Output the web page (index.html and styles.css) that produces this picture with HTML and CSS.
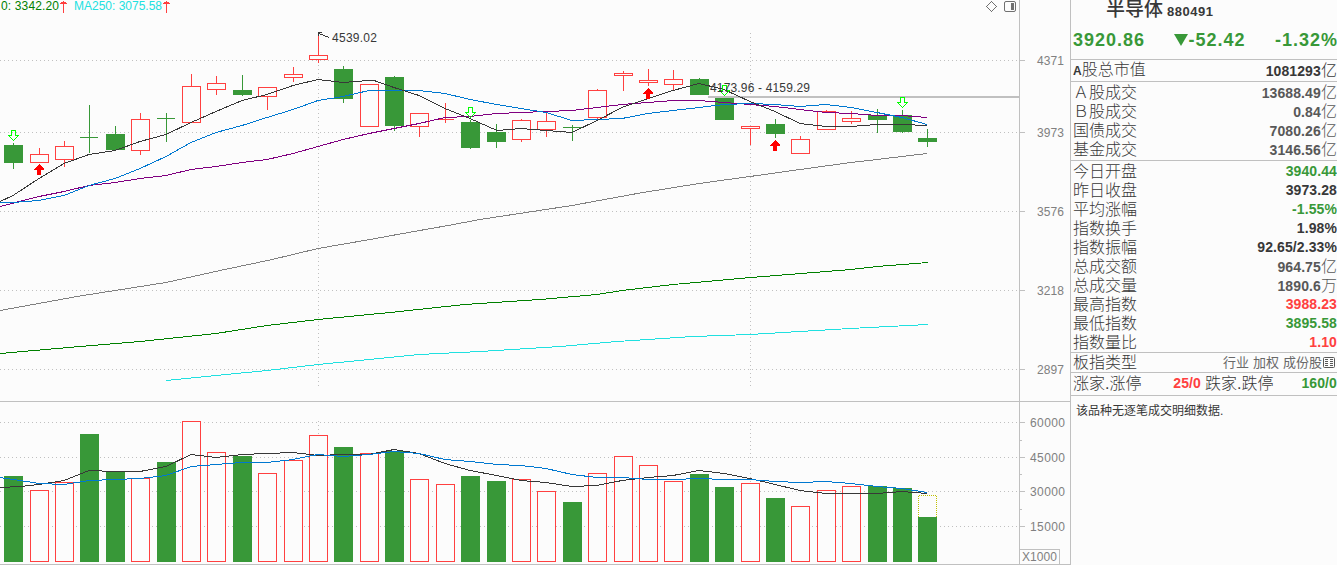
FILE: index.html
```html
<!DOCTYPE html>
<html lang="zh-CN">
<head>
  <meta charset="UTF-8">
  <meta name="viewport" content="width=device-width, initial-scale=1.0">
  <title>半导体 880491</title>
  <link rel="stylesheet" href="styles.css">
</head>
<body>
  <div class="terminal">
    <svg id="chart" class="chart" width="1070" height="565" viewBox="0 0 1070 565">
      <g id="grid"></g>
      <g id="bars"></g>
      <g id="lines"></g>
      <g id="marks"></g>
      <g class="legend">
        <text class="ma120" x="1" y="10" textLength="58">0: 3342.20</text>
        <text class="ma250" x="74" y="10" textLength="88">MA250: 3075.58</text>
        <path class="up" d="M63.5 13V1M60 3.5h7M61 2.5h5M166.5 13V1M163 3.5h7M164 2.5h5"/>
      </g>
      <g class="tools">
        <path class="thin" d="M986.5 6.5l5-5 5 5-5 5z"/>
        <rect x="1004.5" y="1.5" width="11" height="10" rx="1.5"/>
        <rect class="fill" x="1011" y="3" width="3" height="7"/>
      </g>
      <g id="labels"></g>
    </svg>

    <aside class="quote">
      <header class="name"><h1>半导体</h1><span>880491</span></header>
      <div class="price"><b>3920.86</b><b class="change"><i></i>-52.42</b><b>-1.32%</b></div>
      <div class="group cap">
        <div class="row"><span><b>A</b>股总市值</span><b>1081293<em>亿</em></b></div>
      </div>
      <div class="group turnover">
        <div class="row"><span>Ａ股成交</span><b class="gray">13688.49<em>亿</em></b></div>
        <div class="row"><span>Ｂ股成交</span><b class="gray">0.84<em>亿</em></b></div>
        <div class="row"><span>国债成交</span><b class="gray">7080.26<em>亿</em></b></div>
        <div class="row"><span>基金成交</span><b class="gray">3146.56<em>亿</em></b></div>
      </div>
      <div class="group detail">
        <div class="row"><span>今日开盘</span><b class="green">3940.44</b></div>
        <div class="row"><span>昨日收盘</span><b>3973.28</b></div>
        <div class="row"><span>平均涨幅</span><b class="green">-1.55%</b></div>
        <div class="row"><span>指数换手</span><b>1.98%</b></div>
        <div class="row"><span>指数振幅</span><b>92.65/2.33%</b></div>
        <div class="row"><span>总成交额</span><b class="gray">964.75<em>亿</em></b></div>
        <div class="row"><span>总成交量</span><b class="gray">1890.6<em>万</em></b></div>
        <div class="row"><span>最高指数</span><b class="red">3988.23</b></div>
        <div class="row"><span>最低指数</span><b class="green">3895.58</b></div>
        <div class="row"><span>指数量比</span><b class="red">1.10</b></div>
      </div>
      <div class="group type">
        <div class="row">
          <span>板指类型</span>
          <div class="links">
            <span>行业</span><span>加权</span><span>成份股</span>
            <svg width="12" height="12" viewBox="0 0 12 12">
              <rect x="0.5" y="0.5" width="11" height="10" rx="1"/>
              <path d="M2 2.5h3M2 4.5h3M2 6.5h3M2 8.5h3M7 2.5h3M7 4.5h3M7 6.5h3M7 8.5h3"/>
            </svg>
          </div>
        </div>
      </div>
      <div class="group updown">
        <span>涨家.涨停</span><b class="red">25/0</b><span>跌家.跌停</span><b class="green last">160/0</b>
      </div>
      <p class="note">该品种无逐笔成交明细数据.</p>
    </aside>
  </div>

  <script src="chart.js"></script>
</body>
</html>
```
FILE: styles.css
```css
body {
  margin: 0;
  background: #fcfcfc;
  color: #383838;
  font-family: "Liberation Sans", "Noto Sans CJK SC", sans-serif;
  overflow: hidden;
}
.terminal {
  display: flex;
  width: 1337px;
  height: 565px;
  overflow: hidden;
}

/* chart */
.chart {
  flex: none;
  display: block;
  shape-rendering: crispEdges;
  font-size: 12px;
}
.chart path,
.chart polyline {
  fill: none;
}
.frame {
  stroke: #c0c0c0;
}
.dots {
  stroke: #c0c0c0;
  stroke-dasharray: 1 3;
}
.level {
  fill: #c0c0c0;
}
.axis {
  fill: #808080;
}
.tag {
  fill: #383838;
}
.rise {
  fill: #fcfcfc;
  stroke: #ff4040;
}
.fall {
  fill: #389838;
  stroke: #389838;
}
.forecast {
  fill: none;
  stroke: #c0c000;
  stroke-dasharray: 1 1;
}
.ma5 { stroke: #383838; }
.ma10 { stroke: #0078d0; }
.ma20 { stroke: #800080; }
.ma60 { stroke: #808080; }
.ma120 { stroke: #008000; }
.ma250 { stroke: #20e0e0; }
.legend text {
  stroke: none;
}
.legend .ma120 { fill: #008000; }
.legend .ma250 { fill: #20e0e0; }
.legend .up { stroke: #ff4040; }
.buy {
  fill: #ff0000;
}
.sell {
  fill: none;
  stroke: #00ff00;
}
.tools path,
.tools rect {
  fill: none;
  stroke: #707070;
}
.tools rect {
  shape-rendering: auto;
}
.tools .fill {
  fill: #707070;
  stroke: none;
}

/* quote panel */
.quote {
  flex: none;
  box-sizing: border-box;
  width: 267px;
  border-left: 1px solid #c0c0c0;
  overflow: hidden;
}
.name {
  display: flex;
  align-items: center;
  height: 20px;
  padding-left: 35px;
}
.name h1 {
  margin: 0 4px 0 0;
  font-size: 19px;
  font-weight: 500;
  line-height: 20px;
}
.name span {
  padding-top: 3px;
  font-size: 13px;
  font-weight: bold;
  letter-spacing: 0.5px;
}
.price {
  display: flex;
  justify-content: space-between;
  align-items: center;
  height: 39px;
  padding: 2px 0 0 2px;
  box-sizing: border-box;
  color: #389838;
  font-size: 18px;
  letter-spacing: 1px;
}
.price b:last-child {
  margin-right: -1px;
}
.change i {
  display: inline-block;
  border: 7px solid transparent;
  border-top: 12px solid #389838;
  border-bottom: 0;
}
.group {
  border-top: 1px solid #c0c0c0;
}
.row {
  display: flex;
  justify-content: space-between;
  align-items: center;
  height: 19px;
  padding-left: 2px;
  font-size: 16px;
  line-height: 19px;
  white-space: nowrap;
}
.row > span,
.updown span {
  font-weight: 300;
}
.row > b,
.updown b {
  font-size: 14px;
  letter-spacing: 0.1px;
}
.row span b {
  font-size: 12px;
  font-weight: bold;
}
.row em {
  font-size: 16px;
  font-style: normal;
  font-weight: 300;
}
.cap .row {
  height: 21px;
}
.turnover,
.detail {
  padding-top: 1px;
}
.turnover {
  padding-bottom: 1px;
}
.green {
  color: #389838;
}
.red {
  color: #ff4040;
}
.gray {
  color: #585858;
}
.links {
  display: flex;
  align-items: center;
  gap: 4px;
  padding-right: 2px;
  color: #686868;
  font-size: 13px;
}
.links svg {
  margin-left: -3px;
  fill: none;
  stroke: #585858;
}
.updown {
  display: flex;
  align-items: center;
  height: 22px;
  padding-left: 2px;
  white-space: nowrap;
  font-size: 16px;
  line-height: 19px;
}
.updown span,
.updown b {
  margin-top: -2px;
}
.updown .red {
  width: 64px;
  margin-right: 4px;
  text-align: right;
}
.updown .last {
  margin-left: 28px;
}
.note {
  margin: 0;
  padding: 6px 0 0 5px;
  border-top: 1px solid #c0c0c0;
  font-size: 12px;
  line-height: 18px;
}
```
FILE: chart.js
```js
const NS = 'http://www.w3.org/2000/svg';
const W = 19;

function add(group, tag, attrs, text) {
  const el = document.createElementNS(NS, tag);
  for (const key in attrs) el.setAttribute(key, attrs[key]);
  if (text) el.textContent = text;
  document.getElementById(group).appendChild(el);
}

function line(group, cls, x1, y1, x2, y2) {
  add(group, 'path', { class: cls, d: `M${x1} ${y1}L${x2} ${y2}` });
}

// x, colour, high, body top, body bottom, low, volume top
const candles = [
  [4, 'g', 143, 145, 163, 169, 476], [30, 'r', 148, 154, 163, 163, 490],
  [55, 'r', 141, 146, 160, 167, 482], [80, 'g', 105, 137, 138, 153, 434],
  [106, 'g', 126, 134, 150, 150, 472], [131, 'r', 113, 119, 151, 155, 478],
  [157, 'g', 113, 118, 119, 142, 462], [182, 'r', 74, 86, 123, 123, 421],
  [207, 'r', 76, 83, 90, 95, 452], [233, 'g', 75, 90, 95, 96, 456],
  [258, 'r', 87, 87, 97, 110, 473], [284, 'r', 67, 74, 78, 82, 460],
  [309, 'r', 34, 55, 60, 63, 435], [334, 'g', 66, 69, 99, 103, 447],
  [360, 'r', 84, 84, 127, 127, 453], [385, 'g', 76, 77, 126, 131, 451],
  [410, 'r', 113, 113, 127, 137, 479], [436, 'r', 103, 119, 120, 123, 484],
  [461, 'g', 120, 122, 148, 149, 476], [487, 'g', 124, 132, 142, 148, 481],
  [512, 'r', 119, 120, 140, 142, 479], [537, 'r', 113, 121, 130, 137, 491],
  [563, 'g', 125, 127, 128, 141, 502], [588, 'r', 89, 90, 118, 119, 473],
  [614, 'r', 71, 73, 76, 91, 456], [639, 'r', 69, 80, 83, 86, 465],
  [664, 'r', 70, 79, 85, 90, 481], [690, 'g', 78, 79, 95, 95, 474],
  [715, 'g', 98, 98, 120, 120, 487], [741, 'r', 126, 126, 129, 145, 483],
  [766, 'g', 119, 124, 134, 138, 498], [791, 'r', 136, 139, 154, 154, 506],
  [817, 'r', 110, 111, 130, 130, 490], [842, 'r', 111, 118, 122, 124, 486],
  [868, 'g', 109, 115, 120, 133, 486], [893, 'g', 110, 115, 132, 133, 488],
  [918, 'g', 129, 138, 142, 147, 517]
];

const mas = {
  ma60: '0,310.5 80,296 166,282.5 220,270.5 270,260 318,248.5 370,239.5 400,234 448,225.5 480,219.5 572,205.5 640,193 699,183.5 750,176.5 800,169.5 851,162.5 877,159.5 927,153.5',
  ma120: '0,353.5 80,346.5 140,341.5 216,333.5 267,325.5 318,319.5 390,312.5 465,304.5 540,299.5 597,294.5 622,290.5 673,284.5 751,277.5 851,269.5 877,266.5 928,262.5',
  ma250: '166,380.5 216,375.5 267,370.5 318,364.5 349,361.5 419,354.5 480,351.5 560,346.5 617,341.5 693,336.5 750,334.5 850,328.5 928,324.5',
  ma20: '0,206.5 39,196.5 64,191.5 89,185.5 115,182.5 140,178.5 166,175.5 191,169.5 216,166.5 242,162.5 267,159.5 293,153.5 318,146.5 343,139.5 369,133.5 394,128.5 419,123.5 445,117.5 470,116.5 497,113.5 521,112.5 546,111.5 572,110.5 597,107.5 622,104.5 648,102.5 673,100.5 699,100.5 724,102.5 750,104.5 775,106.5 800,109.5 826,112.5 851,113.5 877,115.5 902,115.5 927,117.5',
  ma10: '0,202.5 13,202.5 39,200.5 64,195.5 89,185.5 115,178.5 140,168.5 166,156.5 191,142.5 216,132.5 242,125.5 267,117.5 293,109.5 318,100.5 343,96.5 369,90.5 419,90.5 445,93.5 470,99.5 497,104.5 521,108.5 546,112.5 572,120.5 597,119.5 622,118.5 648,113.5 673,110.5 699,107.5 724,104.5 750,103.5 775,104.5 800,106.5 826,104.5 851,107.5 877,112.5 902,117.5 927,124.5',
  ma5: '0,201.5 13,195.5 39,178.5 64,163.5 89,154.5 115,150.5 140,141.5 166,134.5 191,122.5 216,111.5 242,100.5 267,94.5 293,85.5 318,79.5 343,82.5 369,80.5 374,80.5 394,87.5 419,95.5 445,108.5 470,118.5 497,130.5 521,128.5 546,130.5 572,132.5 597,120.5 622,107.5 648,98.5 673,90.5 699,83.5 724,89.5 750,101.5 775,111.5 800,123.5 826,126.5 851,126.5 877,124.5 902,124.5 927,125.5'
};

const volumeMas = {
  ma5: '0,487.5 20,486.5 39,484.5 64,480.5 89,470.5 115,471.5 140,471.5 166,466.5 191,454.5 216,457.5 242,454.5 267,453.5 293,452.5 318,455.5 343,454.5 369,454.5 394,449.5 419,453.5 445,463.5 470,470.5 497,475.5 521,480.5 546,482.5 572,486.5 597,485.5 622,480.5 648,477.5 673,475.5 699,470.5 724,473.5 750,478.5 775,484.5 800,490.5 826,493.5 877,493.5 902,491.5 927,493.5',
  ma10: '0,477.5 20,480.5 39,483.5 64,484.5 89,480.5 115,479.5 140,478.5 166,475.5 191,466.5 216,464.5 242,462.5 267,462.5 293,459.5 318,454.5 343,456.5 369,454.5 394,451.5 419,453.5 445,459.5 470,461.5 497,464.5 521,465.5 546,468.5 572,474.5 597,477.5 622,477.5 648,479.5 673,479.5 699,478.5 724,479.5 750,479.5 775,481.5 800,482.5 826,481.5 851,483.5 877,486.5 902,488.5 927,492.5'
};

// grid, frame and axis
const priceAxis = { 4371: 60, 3973: 132, 3576: 211, 3218: 290, 2897: 369 };
const volumeAxis = { 60000: 422, 45000: 457, 30000: 491, 15000: 526 };
for (const axis of [priceAxis, volumeAxis]) {
  for (const label in axis) {
    const y = axis[label] + 0.5;
    line('grid', 'dots', 0, y, 1019, y);
    line('grid', 'frame', 1019, y, 1025, y);
    add('labels', 'text', {
      class: 'axis', x: axis === priceAxis ? 1037 : 1030, y: y + 4,
      textLength: axis === priceAxis ? 27 : 35
    }, label);
  }
}
for (const y of [440.5, 474.5, 509.5]) line('grid', 'frame', 1019, y, 1022, y);
for (const x of [318.5, 750.5]) {
  line('grid', 'dots', x, 33, x, 387);
  line('grid', 'dots', x, 421, x, 562);
}
line('grid', 'frame', 0, 401.5, 1070, 401.5);
line('grid', 'frame', 0, 564.5, 1070, 564.5);
line('grid', 'frame', 1019.5, 0, 1019.5, 565);
add('grid', 'path', { class: 'frame', d: 'M1020 549.5H1059.5V565' });
add('labels', 'text', { class: 'axis', x: 1022, y: 561, textLength: 35 }, 'X1000');
add('grid', 'rect', { class: 'level', x: 708, y: 96, width: 311, height: 2 });

// candles and volume
function box(cls, x, top, bottom) {
  add('bars', 'rect', { class: cls, x: x + 0.5, y: top + 0.5, width: W - 1, height: bottom - top - 1 });
}
for (const [x, colour, high, top, bottom, low, volume] of candles) {
  const cls = colour === 'r' ? 'rise' : 'fall';
  const mid = x + 9.5;
  if (high < top) line('bars', cls, mid, high, mid, top);
  if (low > bottom) line('bars', cls, mid, bottom, mid, low);
  if (bottom - top === 1) line('bars', cls, x, top + 0.5, x + 18, top + 0.5);
  else box(cls, x, top, bottom);
  box(cls, x, volume, 562);
}
add('bars', 'rect', { fill: '#fcfcfc', x: 918, y: 495, width: W, height: 22 });
add('bars', 'path', { class: 'forecast', d: 'M918.5 517V495.5H936.5V517' });

for (const set of [mas, volumeMas]) {
  for (const name in set) add('lines', 'polyline', { class: name, points: set[name] });
}

// signals
for (const [x, y] of [[13, 130], [470, 107], [724, 85], [902, 97]]) {
  add('marks', 'path', { class: 'sell', d: `M${x - 1.5} ${y + 0.5}h4v5h3l-5 5-5-5h3z` });
}
for (const [x, y] of [[39, 164], [648, 88], [775, 140]]) {
  add('marks', 'polygon', { class: 'buy', points: `${x},${y} ${x + 5},${y + 5} ${x + 5},${y + 6} ${x + 2},${y + 6} ${x + 2},${y + 11} ${x - 2},${y + 11} ${x - 2},${y + 6} ${x - 5},${y + 6} ${x - 5},${y + 5}` });
}
add('marks', 'path', { class: 'ma5', d: 'M318.5 36V32.5M318 32.5h4M319 33.5l10 4' });
add('labels', 'text', { class: 'tag', x: 332, y: 42, textLength: 45 }, '4539.02');
add('labels', 'text', { class: 'tag', x: 710, y: 92, textLength: 100 }, '4173.96 - 4159.29');
```
